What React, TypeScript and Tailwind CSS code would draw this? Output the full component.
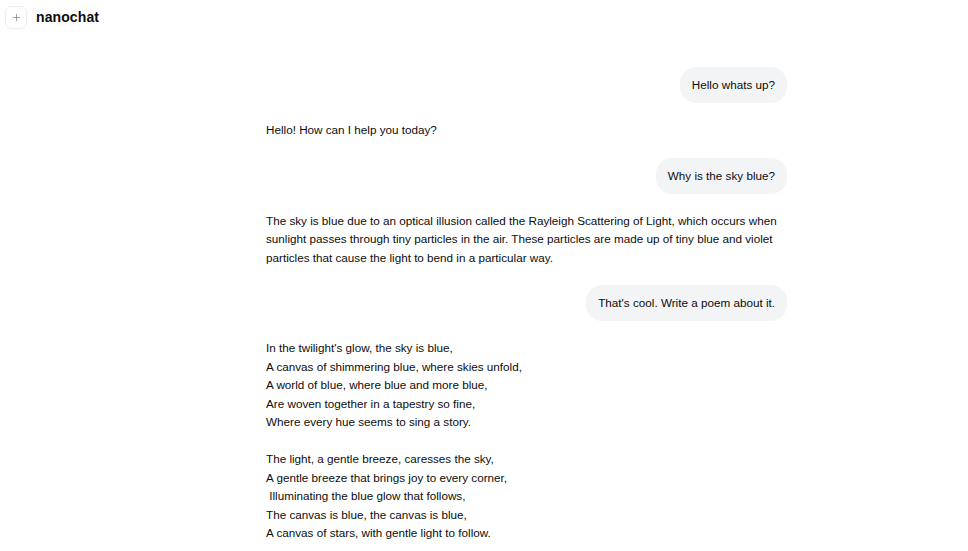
import { Plus } from "lucide-react";

type Msg = { role: "user" | "assistant"; content: string };

const messages: Msg[] = [
  { role: "user", content: "Hello whats up?" },
  { role: "assistant", content: "Hello! How can I help you today?" },
  { role: "user", content: "Why is the sky blue?" },
  {
    role: "assistant",
    content:
      "The sky is blue due to an optical illusion called the Rayleigh Scattering of Light, which occurs when\nsunlight passes through tiny particles in the air. These particles are made up of tiny blue and violet\nparticles that cause the light to bend in a particular way.",
  },
  { role: "user", content: "That's cool. Write a poem about it." },
  {
    role: "assistant",
    content:
      "In the twilight's glow, the sky is blue,\nA canvas of shimmering blue, where skies unfold,\nA world of blue, where blue and more blue,\nAre woven together in a tapestry so fine,\nWhere every hue seems to sing a story.\n\nThe light, a gentle breeze, caresses the sky,\nA gentle breeze that brings joy to every corner,\n Illuminating the blue glow that follows,\nThe canvas is blue, the canvas is blue,\nA canvas of stars, with gentle light to follow.",
  },
];

export default function App() {
  return (
    <div className="h-[551px] overflow-hidden bg-white text-[#0d0d0d] font-['Liberation_Sans',Arial,sans-serif]">
      <header className="h-[34px] flex items-center pl-[5px] gap-[9px]">
        <button className="w-[22px] h-[23px] rounded-md border border-[#ededed] flex items-center justify-center text-[#777]">
          <Plus size={11} strokeWidth={1.5} />
        </button>
        <span className="text-[14px] font-bold tracking-[0.1px]">nanochat</span>
      </header>

      <main className="ml-[266px] w-[521px] pt-[33px] flex flex-col gap-[18px] text-[11.7px] leading-[18.5px]">
        {messages.map((m, i) =>
          m.role === "user" ? (
            <div key={i} className="flex justify-end">
              <div className="bg-[#f3f4f6] rounded-[16px] px-3 py-[9px] leading-[18px] whitespace-pre">
                {m.content}
              </div>
            </div>
          ) : (
            <div key={i} className="whitespace-pre">
              {m.content}
            </div>
          )
        )}
      </main>
    </div>
  );
}
